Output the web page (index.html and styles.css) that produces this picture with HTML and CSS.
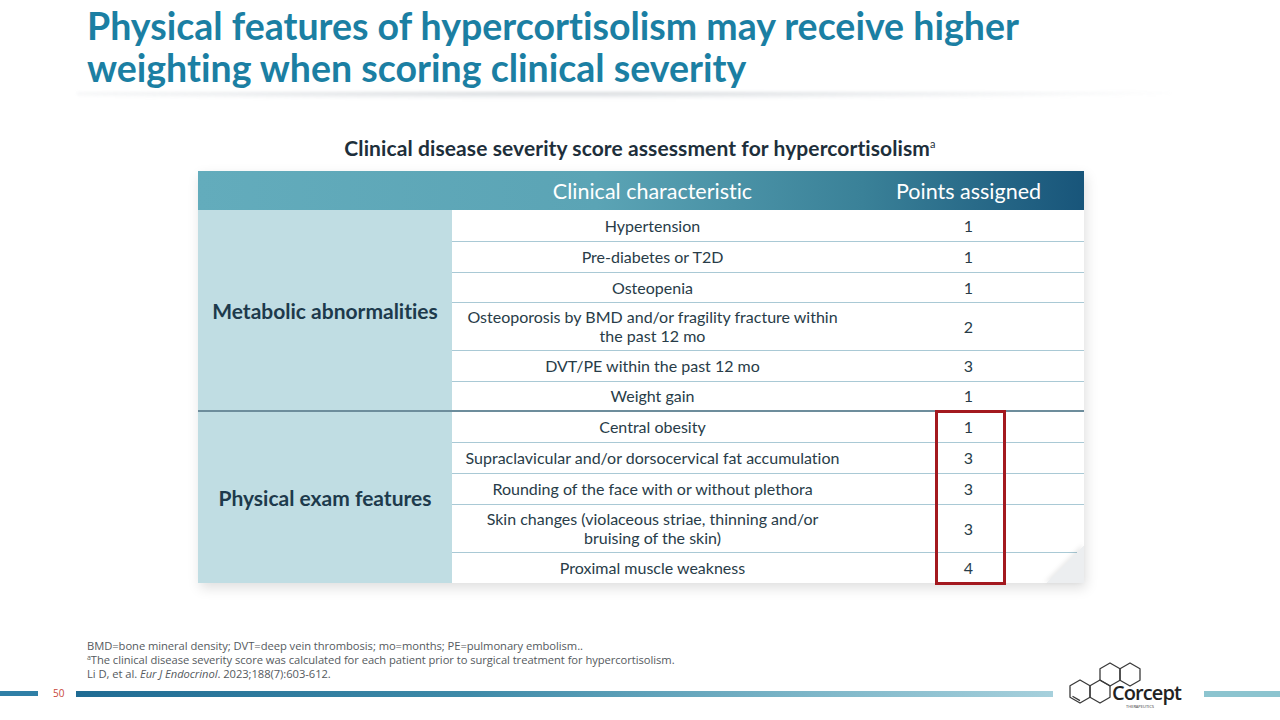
FILE: index.html
```html
<!DOCTYPE html>
<html>
<head>
<meta charset="utf-8">
<link rel="stylesheet" href="styles.css">
</head>
<body>
<div class="slide">
  <header class="title-wrap">
    <h1 class="title">Physical features of hypercortisolism may receive higher<br>weighting when scoring clinical severity</h1>
    <div class="title-shadow"></div>
  </header>

  <h2 class="subtitle">Clinical disease severity score assessment for hypercortisolism<sup>a</sup></h2>

  <div class="table-wrap">
    <table class="score">
      <thead>
        <tr>
          <th class="c1"></th>
          <th class="c2">Clinical characteristic</th>
          <th class="c3">Points assigned</th>
        </tr>
      </thead>
      <tbody class="grp">
        <tr class="h31"><td class="cat" rowspan="6">Metabolic abnormalities</td><td>Hypertension</td><td>1</td></tr>
        <tr class="h31"><td>Pre-diabetes or T2D</td><td>1</td></tr>
        <tr class="h30"><td>Osteopenia</td><td>1</td></tr>
        <tr class="h48"><td>Osteoporosis by BMD and/or fragility fracture within<br>the past 12 mo</td><td>2</td></tr>
        <tr class="h31"><td>DVT/PE within the past 12 mo</td><td>3</td></tr>
        <tr class="h30 last"><td>Weight gain</td><td>1</td></tr>
      </tbody>
      <tbody class="grp grp2">
        <tr class="h31 first"><td class="cat" rowspan="5">Physical exam features</td><td>Central obesity</td><td>1</td></tr>
        <tr class="h31"><td>Supraclavicular and/or dorsocervical fat accumulation</td><td>3</td></tr>
        <tr class="h31"><td>Rounding of the face with or without plethora</td><td>3</td></tr>
        <tr class="h48"><td>Skin changes (violaceous striae, thinning and/or<br>bruising of the skin)</td><td>3</td></tr>
        <tr class="h31 last"><td>Proximal muscle weakness</td><td>4</td></tr>
      </tbody>
    </table>
    <div class="highlight"></div>
    <div class="curl"></div>
  </div>

  <div class="notes">
    <p>BMD=bone mineral density; DVT=deep vein thrombosis; mo=months; PE=pulmonary embolism..</p>
    <p><sup>a</sup>The clinical disease severity score was calculated for each patient prior to surgical treatment for hypercortisolism.</p>
    <p>Li D, et al. <i>Eur J Endocrinol</i>. 2023;188(7):603-612.</p>
  </div>

  <footer class="footer">
    <div class="bar-left"></div>
    <span class="page">50</span>
    <div class="bar-main"></div>
    <svg class="logo" width="124" height="56" viewBox="0 0 124 56">
      <g fill="none" stroke="#3a3a3a" stroke-width="1.3" stroke-linejoin="round">
        <polygon points="14,22 24,27.75 24,39.25 14,45 4,39.25 4,27.75"/>
        <polygon points="34,22 44,27.75 44,39.25 34,45 24,39.25 24,27.75"/>
        <polygon points="44,5 54,10.75 54,22.25 44,28 34,22.25 34,10.75"/>
        <polygon points="64,5 74,10.75 74,22.25 64,28 54,22.25 54,10.75"/>
        <line x1="6.5" y1="38.3" x2="14" y2="42.6"/>
      </g>
      <text x="46" y="42" class="logo-word">Corcept</text>
      <text x="60" y="50" class="logo-sub">THERAPEUTICS</text>
    </svg>
    <div class="bar-right"></div>
  </footer>
</div>
</body>
</html>
```

FILE: styles.css
```css
* { box-sizing: border-box; }
html, body { margin: 0; padding: 0; }
body {
  width: 1280px;
  height: 720px;
  overflow: hidden;
  background: #ffffff;
  font-family: Lato, "Open Sans", sans-serif;
  font-variant-ligatures: none;
}
.slide {
  position: relative;
  width: 1280px;
  height: 720px;
  display: flex;
  flex-direction: column;
}
.title-wrap {
  padding: 5px 0 0 87px;
}
.title {
  margin: 0;
  font-family: Lato, sans-serif;
  font-weight: 700;
  font-size: 37.5px;
  line-height: 42px;
  color: #1b7fa3;
}
.title-shadow {
  margin: 3px 110px 0 -10px;
  height: 7px;
  background: radial-gradient(ellipse at 45% 0%, rgba(120,130,140,0.35) 0%, rgba(160,170,180,0.18) 45%, rgba(255,255,255,0) 75%);
  filter: blur(1.5px);
}
.subtitle {
  margin: 37px 0 0 0;
  text-align: center;
  font-family: Lato, sans-serif;
  font-weight: 700;
  font-size: 21px;
  line-height: 24px;
  color: #1e2f3b;
  letter-spacing: 0.1px;
}
.subtitle sup {
  font-size: 11px;
  font-weight: 400;
  vertical-align: 8px;
  line-height: 0;
}
.table-wrap {
  position: relative;
  margin: 11px 0 0 198px;
  width: 886px;
  box-shadow: 2px 5px 12px rgba(0,0,0,0.13);
}
.score {
  border-collapse: collapse;
  width: 886px;
  table-layout: fixed;
  font-size: 16px;
  color: #283c48;
}
.score th {
  height: 39px;
  padding: 0;
  color: #ffffff;
  font-weight: 400;
  font-size: 21.5px;
  text-align: center;
}
.score thead tr {
  background: linear-gradient(90deg, #63acbc 0%, #5ba4b5 45%, #3a8198 75%, #18557a 100%);
}
.score .c1 { width: 254px; }
.score .c2 { width: 401px; }
.score .c3 { width: 231px; }
.score td {
  padding: 0;
  text-align: center;
  background: #ffffff;
  border-top: 1px solid #a9c9d5;
  line-height: 19px;
}
.score td.cat {
  background: #c0dde3;
  font-weight: 700;
  font-size: 21px;
  color: #1d3a4c;
  border-top: none;
}
.score tr.h31 td { height: 31px; }
.score tr.h30 td { height: 30px; }
.score tr.h48 td { height: 48px; }
.score tr:first-child td { border-top: none; }
.score tbody.grp2 tr.first td { border-top: 2px solid #6d8d9c; }
.highlight {
  position: absolute;
  left: 737px;
  top: 239px;
  width: 71px;
  height: 175px;
  border: 3px solid #a3191f;
}
.curl {
  position: absolute;
  right: 0;
  bottom: 0;
  width: 38px;
  height: 37px;
  background: linear-gradient(to bottom right, rgba(255,255,255,0) 50%, #eceef0 50%);
  filter: drop-shadow(-2px -1px 2px rgba(0,0,0,0.08));
}
.notes {
  margin: 56px 0 0 87px;
  height: 42px;
  font-family: "Open Sans", Lato, sans-serif;
  font-size: 11.2px;
  line-height: 14px;
  color: #555a5e;
  letter-spacing: -0.05px;
}
.notes p { margin: 0; white-space: nowrap; }
.notes sup { font-size: 7px; vertical-align: 4px; line-height: 0; }
.footer {
  height: 30px;
  display: flex;
  align-items: flex-start;
}
.bar-left {
  width: 38px;
  height: 5px;
  margin-top: 10px;
  background: #2f7fa6;
}
.page {
  margin: 6px 0 0 15px;
  width: 23px;
  font-family: "Open Sans", sans-serif;
  font-size: 10px;
  line-height: 12px;
  color: #c8473a;
}
.bar-main {
  width: 977px;
  height: 6px;
  margin-top: 10px;
  background: linear-gradient(90deg, #1f6b93 0%, #3e8aa8 40%, #7db6c8 75%, #a6d0dc 100%);
}
.logo {
  margin: -23px 0 0 13px;
}
.logo-word {
  font-family: "Open Sans", sans-serif;
  font-size: 20px;
  font-weight: 600;
  fill: #222;
  letter-spacing: -0.9px;
}
.logo-sub {
  font-family: "Open Sans", sans-serif;
  font-size: 4px;
  fill: #333;
}
.bar-right {
  margin: 10px 0 0 14px;
  flex: 1;
  height: 6px;
  background: #8cc4cf;
}
```
